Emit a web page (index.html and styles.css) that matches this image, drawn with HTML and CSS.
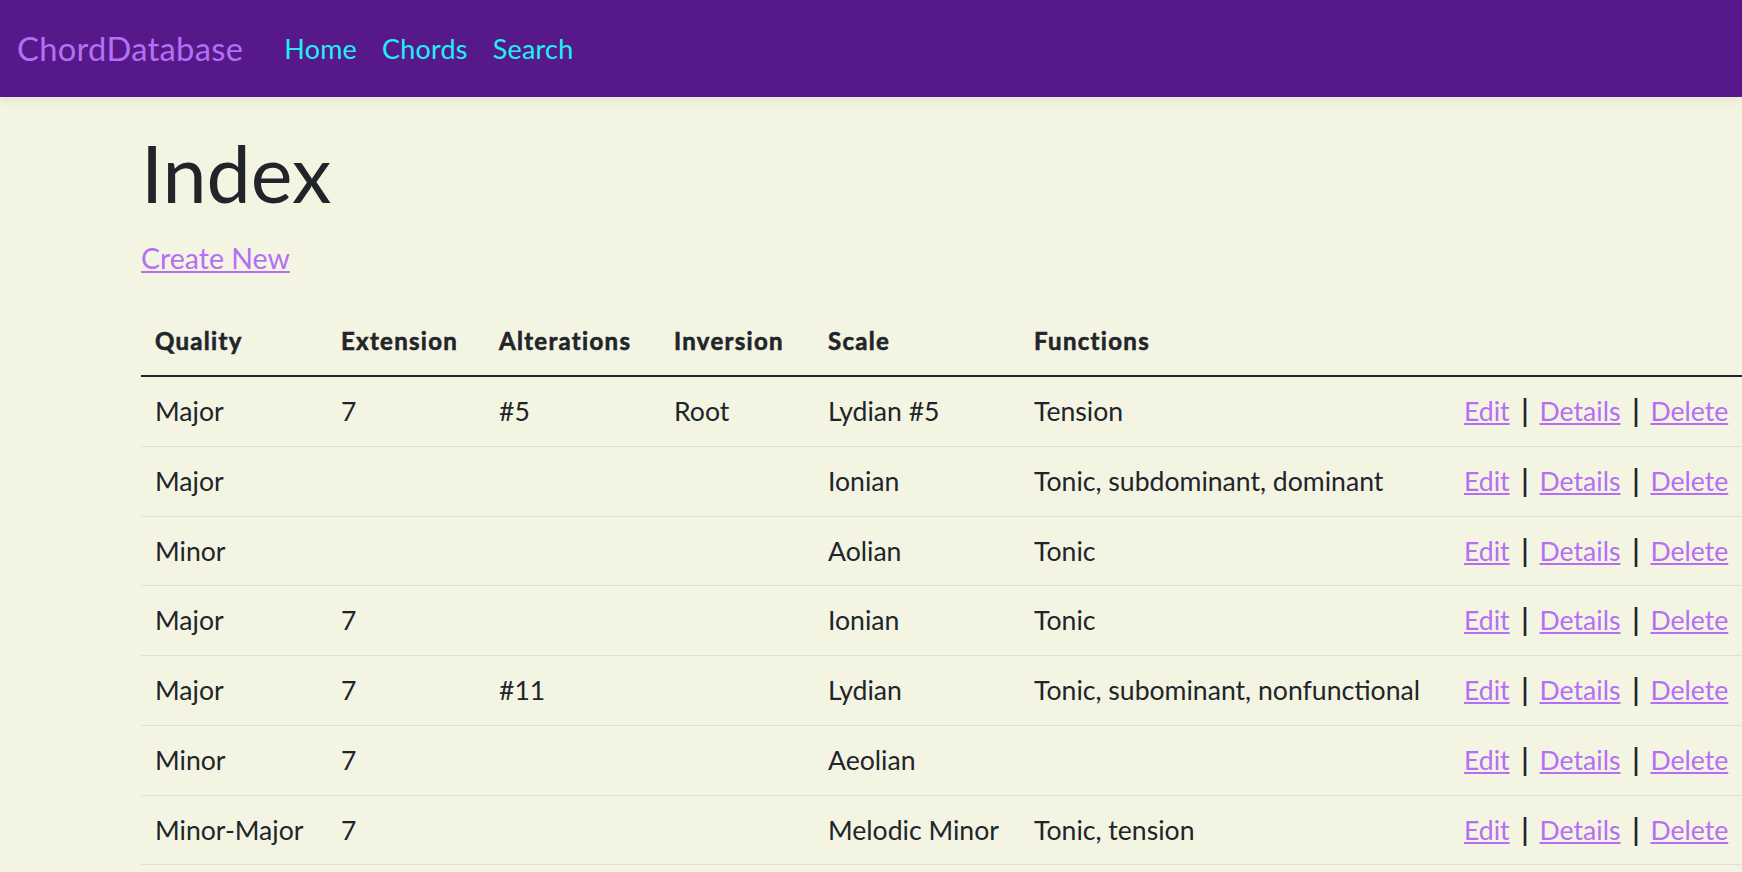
FILE: index.html
```html
<!DOCTYPE html>
<html lang="en">
<head>
<meta charset="utf-8">
<title>Index - ChordDatabase</title>
<link rel="stylesheet" href="styles.css">
</head>
<body>
<header class="navbar">
  <a class="brand" href="#">ChordDatabase</a>
  <nav class="nav-links">
    <a href="#">Home</a>
    <a href="#">Chords</a>
    <a href="#">Search</a>
  </nav>
</header>
<main class="content">
  <h1 class="title">Index</h1>
  <p class="create"><a href="#">Create New</a></p>
  <table class="chords">
    <colgroup>
      <col class="c-quality"><col class="c-ext"><col class="c-alt"><col class="c-inv"><col class="c-scale"><col class="c-func"><col class="c-act">
    </colgroup>
    <thead>
      <tr><th>Quality</th><th>Extension</th><th>Alterations</th><th>Inversion</th><th>Scale</th><th>Functions</th><th></th></tr>
    </thead>
    <tbody>
      <tr><td>Major</td><td>7</td><td>#5</td><td>Root</td><td>Lydian #5</td><td>Tension</td><td class="actions"><a href="#">Edit</a><span class="sep">|</span><a href="#">Details</a><span class="sep">|</span><a href="#">Delete</a></td></tr>
      <tr><td>Major</td><td></td><td></td><td></td><td>Ionian</td><td>Tonic, subdominant, dominant</td><td class="actions"><a href="#">Edit</a><span class="sep">|</span><a href="#">Details</a><span class="sep">|</span><a href="#">Delete</a></td></tr>
      <tr><td>Minor</td><td></td><td></td><td></td><td>Aolian</td><td>Tonic</td><td class="actions"><a href="#">Edit</a><span class="sep">|</span><a href="#">Details</a><span class="sep">|</span><a href="#">Delete</a></td></tr>
      <tr><td>Major</td><td>7</td><td></td><td></td><td>Ionian</td><td>Tonic</td><td class="actions"><a href="#">Edit</a><span class="sep">|</span><a href="#">Details</a><span class="sep">|</span><a href="#">Delete</a></td></tr>
      <tr><td>Major</td><td>7</td><td>#11</td><td></td><td>Lydian</td><td>Tonic, subominant, nonfunctional</td><td class="actions"><a href="#">Edit</a><span class="sep">|</span><a href="#">Details</a><span class="sep">|</span><a href="#">Delete</a></td></tr>
      <tr><td>Minor</td><td>7</td><td></td><td></td><td>Aeolian</td><td></td><td class="actions"><a href="#">Edit</a><span class="sep">|</span><a href="#">Details</a><span class="sep">|</span><a href="#">Delete</a></td></tr>
      <tr><td>Minor-Major</td><td>7</td><td></td><td></td><td>Melodic Minor</td><td>Tonic, tension</td><td class="actions"><a href="#">Edit</a><span class="sep">|</span><a href="#">Details</a><span class="sep">|</span><a href="#">Delete</a></td></tr>
    </tbody>
  </table>
</main>
</body>
</html>
```

FILE: styles.css
```css
html, body {
  margin: 0;
  padding: 0;
  overflow: hidden;
}

body {
  background: #f4f4e3;
  color: #212529;
  font-family: Lato, "Open Sans", sans-serif;
  font-size: 26.6px;
  width: 1742px;
  height: 872px;
}

.navbar {
  height: 97px;
  background: #57198a;
  display: flex;
  align-items: center;
  padding-left: 17px;
  box-shadow: 0 3px 10px rgba(0, 0, 0, 0.08);
  position: relative;
  z-index: 1;
}

.brand {
  color: #b46ff5;
  font-size: 32.7px;
  text-decoration: none;
  letter-spacing: 0.3px;
}

.nav-links {
  display: flex;
  gap: 25px;
  margin-left: 41px;
}

.nav-links a {
  color: #1ef0f5;
  font-size: 27px;
  letter-spacing: 0.2px;
  text-decoration: none;
}

.content {
  padding-left: 141px;
}

.title {
  margin: 28px 0 0;
  font-size: 79px;
  font-weight: 400;
  line-height: 1.22;
}

.create {
  margin: 18px 0 0;
  line-height: 39px;
  font-size: 28.5px;
}

a {
  color: #b46ff5;
}

.chords {
  margin-top: 29px;
  width: 1601px;
  border-collapse: collapse;
  table-layout: fixed;
}

.c-quality { width: 186px; }
.c-ext { width: 158px; }
.c-alt { width: 175px; }
.c-inv { width: 154px; }
.c-scale { width: 206px; }
.c-func { width: 430px; }
.c-act { width: 292px; }

.chords th {
  text-align: left;
  font-weight: 700;
  font-size: 24px;
  letter-spacing: 1.3px;
  line-height: 36px;
  padding: 16px 14px;
  border-bottom: 2px solid #212529;
  white-space: nowrap;
  -webkit-text-stroke: 0.6px #212529;
}

.chords td {
  padding: 16px 14px;
  line-height: 36.7px;
  border-bottom: 1px solid #dfe0dc;
  white-space: nowrap;
}

.actions {
  color: #212529;
}

.sep {
  display: inline-block;
  margin: 0 11px 0 12px;
  font-weight: 700;
  transform: scaleY(1.15);
}
```
